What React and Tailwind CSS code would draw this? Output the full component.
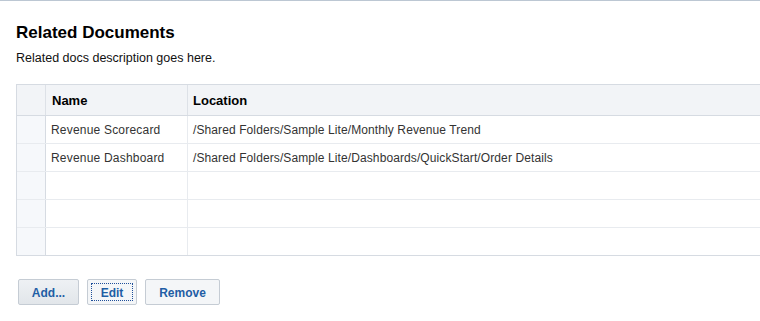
import React from 'react';

const rows = [
  { name: 'Revenue Scorecard', location: '/Shared Folders/Sample Lite/Monthly Revenue Trend' },
  { name: 'Revenue Dashboard', location: '/Shared Folders/Sample Lite/Dashboards/QuickStart/Order Details' },
  { name: '', location: '' },
  { name: '', location: '' },
  { name: '', location: '' },
];

const App = () => {
  return (
    <div
      className="w-[760px] h-[321px] overflow-hidden bg-white border-t border-[#bcc7d3]"
      style={{ fontFamily: '"Liberation Sans", Arial, sans-serif' }}
    >
      <div className="pl-4 pt-[21px]">
        <h1 className="text-[17px] leading-[22px] font-bold text-black">Related Documents</h1>
        <p className="mt-[6px] text-[12.5px] leading-[16px] text-[#111]">Related docs description goes here.</p>

        {/* documents grid */}
        <div className="mt-[18px] w-[800px] border-l border-t border-[#d6dbe2]">
          <div className="flex h-[31px] bg-[#f2f4f7] border-b border-[#d6dbe2]">
            <div className="w-[29px] border-r border-[#dde1e7]"></div>
            <div className="w-[142px] border-r border-[#dde1e7] pl-[6px] pt-[1px] flex items-center text-[13px] font-bold text-black">
              Name
            </div>
            <div className="flex-1 pl-[5px] pt-[1px] flex items-center text-[13px] font-bold text-black">Location</div>
          </div>
          {rows.map((row, i) => (
            <div
              key={i}
              className={`flex h-[28px] border-b ${i === rows.length - 1 ? 'border-[#d6dbe2]' : 'border-[#e8ebef]'}`}
            >
              <div className="w-[29px] bg-[#f6f8fb] border-r border-[#d6dbe2]"></div>
              <div className="w-[142px] border-r border-[#e8ebef] pl-[5px] flex items-center text-[12px] tracking-[0.2px] text-[#333]">
                {row.name}
              </div>
              <div className="flex-1 pl-[5px] flex items-center text-[12px] tracking-[0.1px] text-[#333]">{row.location}</div>
            </div>
          ))}
        </div>

        <div className="mt-[23px] ml-[2px] flex items-center">
          <button className="w-[61px] h-[26px] pt-[1px] rounded-[2px] border border-[#c5ccd4] bg-gradient-to-b from-[#eef1f4] to-[#e2e6ea] text-[12px] font-bold text-[#1f5ea5]">
            Add...
          </button>
          <button className="ml-[8px] w-[50px] h-[26px] p-[3px] rounded-[2px] border border-[#c5ccd4] bg-[#f4f6f8] text-[12px] font-bold text-[#1f5ea5]">
            <span className="flex h-full w-full pt-[1px] items-center justify-center border border-dotted border-[#1f4f9a]">Edit</span>
          </button>
          <button className="ml-[8px] w-[75px] h-[26px] pt-[1px] rounded-[2px] border border-[#c5ccd4] bg-[#f4f6f8] text-[12px] font-bold text-[#1f5ea5]">
            Remove
          </button>
        </div>
      </div>
    </div>
  );
};

export default App;
